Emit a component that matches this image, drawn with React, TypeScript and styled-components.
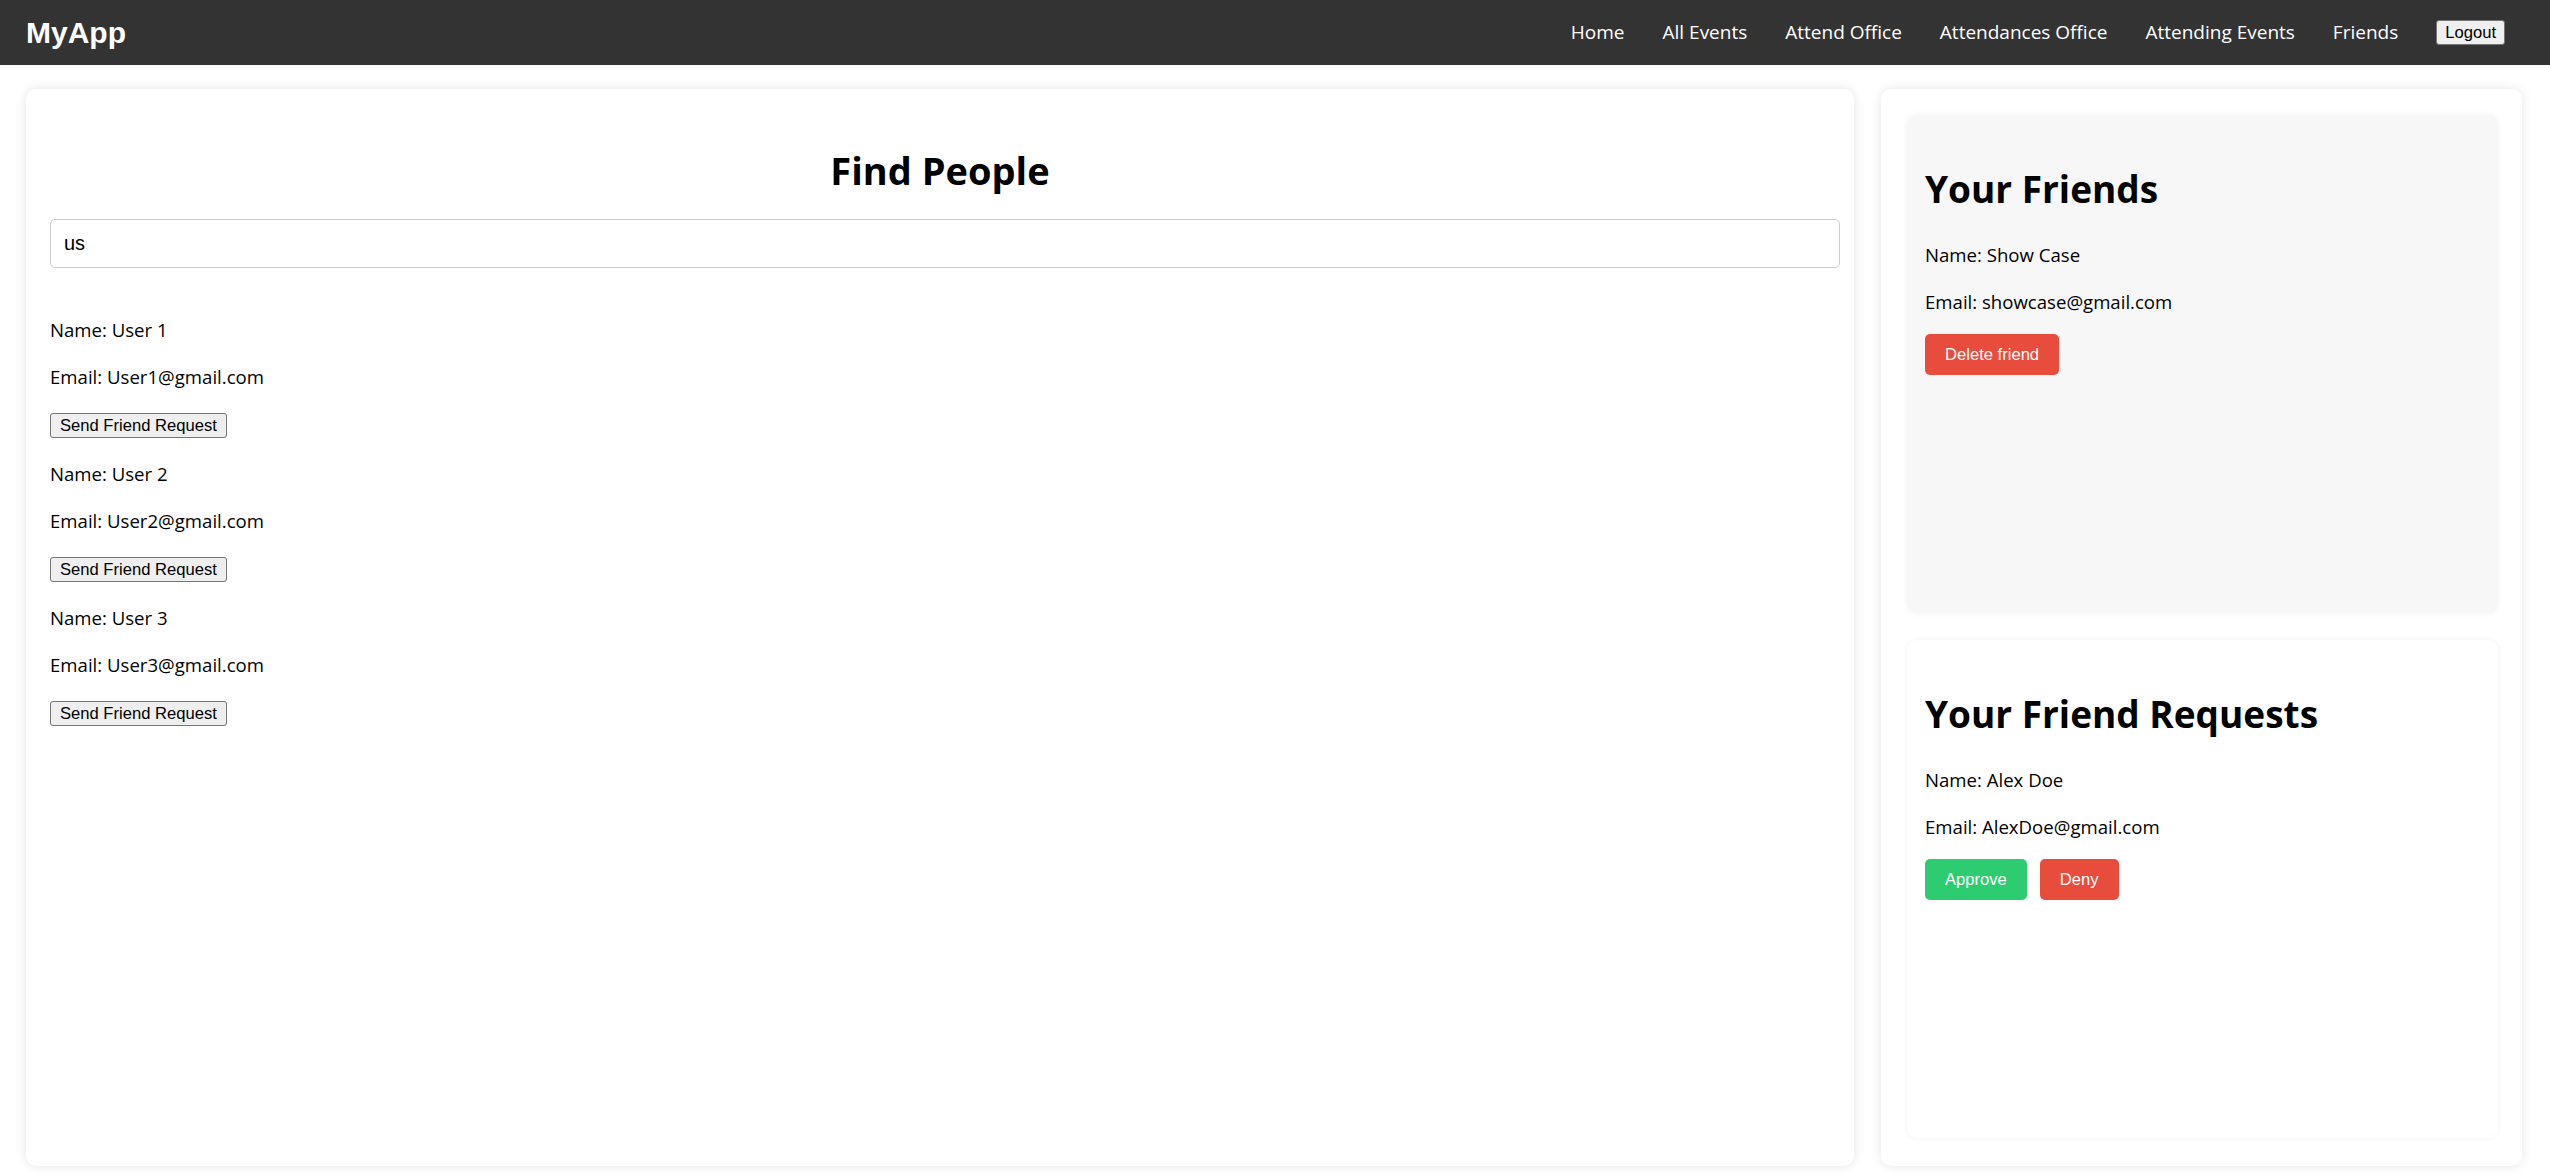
import React from "react";
import styled, { createGlobalStyle } from "styled-components";

const GlobalStyle = createGlobalStyle`
  html, body {
    margin: 0;
    padding: 0;
    background: #ffffff;
    font-family: "Open Sans", "Noto Sans", sans-serif;
    color: #000;
  }
  * { box-sizing: border-box; }
`;

const Navbar = styled.nav`
  height: 65px;
  background: #333333;
  display: flex;
  align-items: center;
  justify-content: space-between;
  padding: 0 45px 0 26px;
`;

const Brand = styled.div`
  font-family: "Liberation Sans", Arial, sans-serif;
  font-weight: bold;
  font-size: 30px;
  color: #ffffff;
  line-height: 1;
`;

const NavLinks = styled.div`
  display: flex;
  align-items: center;
  gap: 38px;
`;

const NavLink = styled.a`
  color: #ffffff;
  font-size: 19px;
  text-decoration: none;
  line-height: 1;
  cursor: pointer;
`;

const NativeButton = styled.button`
  font-family: "Liberation Sans", Arial, sans-serif;
  font-size: 16.6px;
  line-height: 19px;
  color: #000;
  background: #efefef;
  border: 1px solid #767676;
  border-radius: 3px;
  padding: 2px 8px;
  cursor: pointer;
`;

const Main = styled.main`
  display: flex;
  gap: 27px;
  height: 1111px;
  padding: 24px 28px 10px 26px;
`;

const Card = styled.section<{ $width?: number }>`
  background: #ffffff;
  border-radius: 10px;
  box-shadow: 0 0 12px rgba(0, 0, 0, 0.1);
  ${(p) => (p.$width ? `width: ${p.$width}px; flex: none;` : "flex: 1;")}
`;

const LeftCard = styled(Card)`
  padding: 25px 24px;
`;

const RightCard = styled(Card)`
  padding: 26px 24px 28px 26px;
  display: flex;
  flex-direction: column;
  gap: 27px;
`;

const Title = styled.h1`
  margin: 30px 0 22px;
  font-size: 38px;
  line-height: 53px;
  font-weight: 700;
  text-align: center;
`;

const SearchInput = styled.input`
  display: block;
  width: calc(100% + 10px);
  height: 49px;
  border: 1px solid #cccccc;
  border-radius: 5px;
  padding: 0 13px;
  font-family: "Liberation Sans", Arial, sans-serif;
  font-size: 20px;
  color: #000;
  outline: none;
`;

const UserList = styled.div`
  margin-top: 48px;
  display: flex;
  flex-direction: column;
  gap: 22px;
`;

const Entry = styled.div`
  display: flex;
  flex-direction: column;
  align-items: flex-start;
  gap: 20px;
`;

const Line = styled.p`
  margin: 0;
  font-size: 18.6px;
  line-height: 27px;
`;

const RequestButton = styled(NativeButton)`
  margin-top: 3px;
  padding: 2px 9px;
`;

const Panel = styled.div<{ $shade?: boolean }>`
  flex: 1;
  border-radius: 10px;
  padding: 18px;
  background: ${(p) => (p.$shade ? "#f7f7f7" : "#ffffff")};
  box-shadow: 0 0 6px rgba(0, 0, 0, 0.06);
  display: flex;
  flex-direction: column;
  align-items: flex-start;
`;

const PanelTitle = styled.h2`
  margin: 29px 0 26px;
  font-size: 37px;
  line-height: 53px;
  font-weight: 700;
`;

const PanelEntry = styled.div`
  display: flex;
  flex-direction: column;
  align-items: flex-start;
  gap: 20px;
`;

const Actions = styled.div`
  display: flex;
  gap: 13px;
  margin-top: -1px;
`;

const ActionButton = styled.button<{ $tone: "red" | "green" }>`
  font-family: "Liberation Sans", Arial, sans-serif;
  font-size: 16.6px;
  line-height: 19px;
  color: #ffffff;
  background: ${(p) => (p.$tone === "red" ? "#e74c3c" : "#2ecc71")};
  border: none;
  border-radius: 5px;
  padding: 11px 20px;
  cursor: pointer;
`;

const users = [
  { name: "User 1", email: "User1@gmail.com" },
  { name: "User 2", email: "User2@gmail.com" },
  { name: "User 3", email: "User3@gmail.com" },
];

const links = [
  "Home",
  "All Events",
  "Attend Office",
  "Attendances Office",
  "Attending Events",
  "Friends",
];

export default function App() {
  return (
    <>
      <GlobalStyle />
      <Navbar>
        <Brand>MyApp</Brand>
        <NavLinks>
          {links.map((l) => (
            <NavLink key={l}>{l}</NavLink>
          ))}
          <NativeButton>Logout</NativeButton>
        </NavLinks>
      </Navbar>
      <Main>
        <LeftCard>
          <Title>Find People</Title>
          <SearchInput defaultValue="us" />
          <UserList>
            {users.map((u) => (
              <Entry key={u.name}>
                <Line>Name: {u.name}</Line>
                <Line>Email: {u.email}</Line>
                <RequestButton>Send Friend Request</RequestButton>
              </Entry>
            ))}
          </UserList>
        </LeftCard>
        <RightCard $width={641}>
          <Panel $shade>
            <PanelTitle>Your Friends</PanelTitle>
            <PanelEntry>
              <Line>Name: Show Case</Line>
              <Line>Email: showcase@gmail.com</Line>
              <Actions>
                <ActionButton $tone="red">Delete friend</ActionButton>
              </Actions>
            </PanelEntry>
          </Panel>
          <Panel>
            <PanelTitle>Your Friend Requests</PanelTitle>
            <PanelEntry>
              <Line>Name: Alex Doe</Line>
              <Line>Email: AlexDoe@gmail.com</Line>
              <Actions>
                <ActionButton $tone="green">Approve</ActionButton>
                <ActionButton $tone="red">Deny</ActionButton>
              </Actions>
            </PanelEntry>
          </Panel>
        </RightCard>
      </Main>
    </>
  );
}
